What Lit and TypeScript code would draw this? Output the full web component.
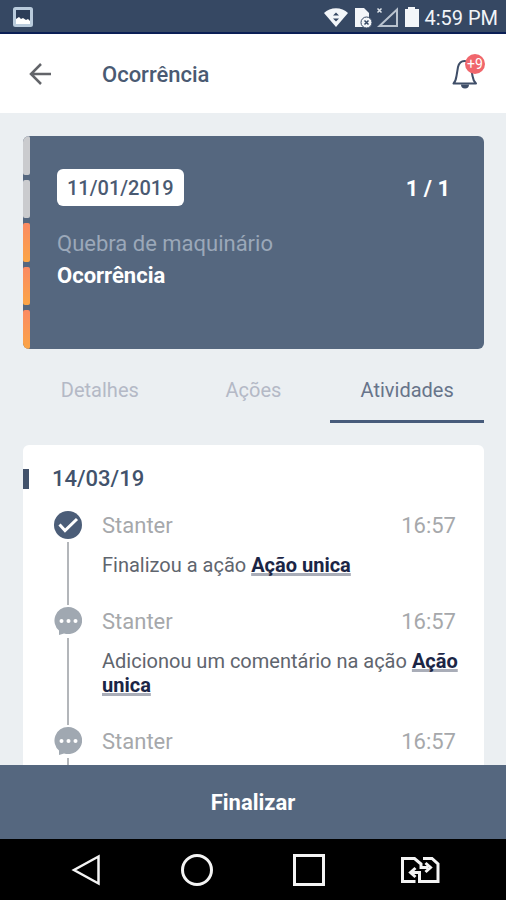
import { LitElement, html, css, svg, nothing } from "lit";
import { customElement, property, state } from "lit/decorators.js";
import { classMap } from "lit/directives/class-map.js";

type Kind = "done" | "comment";

interface Activity {
  kind: Kind;
  author: string;
  time: string;
  text: string;
  action: string;
}

const ACTIVITIES: Activity[] = [
  { kind: "done", author: "Stanter", time: "16:57", text: "Finalizou a ação", action: "Ação unica" },
  { kind: "comment", author: "Stanter", time: "16:57", text: "Adicionou um comentário na ação", action: "Ação unica" },
  { kind: "comment", author: "Stanter", time: "16:57", text: "", action: "" },
];

@customElement("status-bar")
class StatusBar extends LitElement {
  static styles = css`
    :host {
      display: flex;
      align-items: center;
      justify-content: space-between;
      box-sizing: border-box;
      height: 34px;
      flex: none;
      padding: 0 8px 0 12px;
      background: #364863;
      border-bottom: 2px solid #0b1f55;
      color: #f1f4f8;
    }
    .right {
      display: flex;
      align-items: center;
      gap: 5px;
    }
    svg {
      display: block;
    }
    .time {
      font-size: 20px;
      line-height: 24px;
      margin-top: 4px;
    }
    .icons {
      margin-top: 2px;
    }
  `;

  render() {
    return html`
      <svg class="icons" width="22" height="22" viewBox="0 0 22 22" aria-hidden="true">
        <rect x="2.500" y="2.500" width="17" height="17" rx="1" fill="#2c3d58" stroke="#b9cbdc" stroke-width="3" />
        <path d="M4 18v-5l3-2 2 2 2-1 3 2 2-1 2 2v3z" fill="#fff" />
      </svg>
      <div class="right">
        <svg class="icons" width="96" height="22" viewBox="0 0 96 22" aria-hidden="true">
          <path d="M1 7C7 .5 19 .5 25 7L13 21z" fill="#f3f6f9" />
          <path d="M10 9.500l3-3 3 3zM10 12.500l3 3 3-3z" fill="#364863" />
          <path d="M32 2h9l5 5v14H32z" fill="#f3f6f9" />
          <circle cx="43.500" cy="16.500" r="5.500" fill="#f3f6f9" stroke="#364863" />
          <path d="M41.500 14.500l4 4m0-4l-4 4" stroke="#364863" stroke-width="1.500" />
          <path d="M56.500 20L74 3.500V20z" fill="none" stroke="#b9c3cf" stroke-width="2" />
          <path d="M54.500 2.500l4 4m0-4l-4 4" stroke="#dfe5eb" stroke-width="1.500" />
          <path d="M82 3h3V1h7v2h4v18H82z" fill="#f3f6f9" />
        </svg>
        <span class="time">4:59 PM</span>
      </div>
    `;
  }
}

@customElement("nav-bar")
class NavBar extends LitElement {
  static styles = css`
    :host {
      display: grid;
      grid-template-columns: repeat(4, 1fr);
      align-items: center;
      height: 61px;
      flex: none;
      padding: 0 30px;
      background: #000;
    }
    button {
      display: flex;
      justify-content: center;
      padding: 0;
      border: 0;
      background: none;
      color: #f4f4f4;
    }
    svg {
      display: block;
      fill: none;
      stroke: currentColor;
      stroke-width: 3;
    }
  `;

  render() {
    return html`
      <button aria-label="Voltar">
        <svg width="32" height="34" viewBox="0 0 32 34"><path d="M28.500 3.500v27L4 17z" stroke-width="2.500" /></svg>
      </button>
      <button aria-label="Início">
        <svg width="34" height="34" viewBox="0 0 34 34"><circle cx="17" cy="17" r="14.500" /></svg>
      </button>
      <button aria-label="Recentes">
        <svg width="34" height="34" viewBox="0 0 34 34"><rect x="2.500" y="2.500" width="29" height="29" /></svg>
      </button>
      <button aria-label="Trocar chip">
        <svg width="40" height="28" viewBox="0 0 40 28">
          <path d="M15.500 25.500H2.500V2.500h12L21 8v3.500h7" />
          <path d="M23 2.500h9l6 5.500v17.500H19.500V16.500H12" />
          <path d="M25.500 7l5 4.500-5 4.500M15.500 12l-5 4.500 5 4.500" />
        </svg>
      </button>
    `;
  }
}

@customElement("activity-item")
class ActivityItem extends LitElement {
  @property({ attribute: false }) item!: Activity;

  static styles = css`
    :host {
      display: flex;
      gap: 20px;
      min-height: 96px;
    }
    .rail {
      display: flex;
      flex-direction: column;
      align-items: center;
      width: 28px;
      flex: none;
    }
    .rail svg {
      display: block;
      flex: none;
    }
    .line {
      width: 2px;
      flex: 1;
      margin: 3px 0 2px;
      background: #b3b6ba;
    }
    .body {
      flex: 1;
      min-width: 0;
      padding-bottom: 30px;
    }
    .head {
      display: flex;
      justify-content: space-between;
      padding-right: 8px;
      font-size: 22px;
      line-height: 30px;
      color: #a6a8ab;
    }
    .text {
      margin: 12px 0 0;
      font-size: 20px;
      line-height: 24px;
      color: #5f656e;
    }
    a {
      color: #1b2545;
      font-weight: 700;
      text-decoration: underline;
      text-decoration-color: #a9adb8;
      text-decoration-thickness: 3px;
      text-underline-offset: 1px;
      text-decoration-skip-ink: none;
    }
  `;

  private icon() {
    return this.item.kind === "done"
      ? svg`<circle cx="14" cy="14" r="14" fill="#4b5d78" />
          <path d="M5.500 13.500l5.500 6L23 8" fill="none" stroke="#fff" stroke-width="3" />`
      : svg`<path d="M14 0a14 13.500 0 1 1-4 26.400L5 28v-4.400A13.500 13.500 0 0 1 14 0z" fill="#a0a8b1" />
          <circle cx="7.500" cy="14" r="2" fill="#fff" />
          <circle cx="14.500" cy="14" r="2" fill="#fff" />
          <circle cx="21.500" cy="14" r="2" fill="#fff" />`;
  }

  render() {
    const { author, time, text, action } = this.item;
    return html`
      <div class="rail">
        <svg width="28" height="28" viewBox="0 0 28 28" aria-hidden="true">${this.icon()}</svg>
        <div class="line"></div>
      </div>
      <div class="body">
        <div class="head"><span>${author}</span><time>${time}</time></div>
        ${text ? html`<p class="text">${text} <a href="#acao">${action}</a></p>` : nothing}
      </div>
    `;
  }
}

@customElement("app-root")
class AppRoot extends LitElement {
  @state() private tab = "Atividades";

  static styles = css`
    :host {
      display: flex;
      flex-direction: column;
      height: 100vh;
      background: #ebeff2;
      font-family: Roboto, "Liberation Sans", sans-serif;
    }
    button {
      font-family: inherit;
      border: 0;
      margin: 0;
      padding: 0;
      background: none;
    }
    svg {
      display: block;
    }
    header {
      display: flex;
      align-items: center;
      height: 79px;
      flex: none;
      padding: 0 21px 0 28px;
      background: #fff;
    }
    .title {
      flex: 1;
      margin: 0 0 0 50px;
      padding-top: 2px;
      font-size: 22px;
      line-height: 28px;
      font-weight: 500;
      color: #4a5a72;
    }
    .bell {
      position: relative;
    }
    .badge {
      position: absolute;
      top: 0;
      right: 0;
      width: 20px;
      border-radius: 10px;
      background: #f0666c;
      color: #fff;
      font-size: 14px;
      line-height: 20px;
      text-align: center;
    }
    main {
      flex: 1;
      min-height: 0;
      overflow-y: auto;
      scrollbar-width: none;
      padding: 23px 22px 0 23px;
    }
    .card {
      display: flex;
      min-height: 213px;
      border-radius: 6px;
      overflow: hidden;
      background: #55677f;
      color: #fff;
    }
    .levels {
      display: grid;
      grid-template-rows: repeat(5, 1fr);
      gap: 5px;
      width: 7px;
      flex: none;
    }
    .level {
      border-radius: 2px;
      background: #cacbce;
    }
    .level.on {
      background: linear-gradient(#fb8a63, #fba546);
    }
    .info {
      flex: 1;
      padding: 33px 34px 0 27px;
    }
    .row {
      display: flex;
      align-items: center;
      justify-content: space-between;
      margin-bottom: 22px;
    }
    .date {
      padding: 5px 10px 3px;
      border-radius: 6px;
      background: #fff;
      color: #4a5a72;
      font-size: 20px;
      line-height: 29px;
      font-weight: 500;
    }
    .count {
      padding-top: 2px;
      font-size: 22px;
      line-height: 28px;
      font-weight: 700;
    }
    .kind,
    .name {
      margin: 0;
      font-size: 22px;
      line-height: 32px;
    }
    .kind {
      color: #9ba8b9;
    }
    .name {
      font-weight: 700;
    }
    .tabs {
      display: grid;
      grid-template-columns: repeat(3, 1fr);
      margin-bottom: 22px;
    }
    .tab {
      padding: 27px 0 16px;
      border-bottom: 3px solid transparent;
      font-size: 20px;
      line-height: 28px;
      color: #b4b9c6;
    }
    .tab.active {
      color: #67748a;
      border-bottom-color: #475b7b;
    }
    .list {
      padding: 19px 20px 24px 0;
      border-radius: 6px;
      background: #fff;
    }
    .day {
      display: flex;
      align-items: center;
      gap: 23px;
      margin: 0 0 17px;
      font-size: 22px;
      line-height: 30px;
      font-weight: 500;
      color: #42526b;
    }
    .mark {
      width: 6px;
      height: 20px;
      background: #42526b;
    }
    .items {
      padding-left: 31px;
    }
    .finish {
      flex: none;
      padding: 24px 0 22px;
      background: #55677f;
      color: #fff;
      font-size: 22px;
      line-height: 28px;
      font-weight: 700;
    }
  `;

  render() {
    return html`
      <status-bar></status-bar>
      <header>
        <button aria-label="Voltar">
          <svg width="24" height="24" viewBox="0 0 24 24" fill="none" stroke="#626469" stroke-width="2.500">
            <path d="M23 12H3M13 2L3 12l10 10" />
          </svg>
        </button>
        <h1 class="title">Ocorrência</h1>
        <button class="bell" aria-label="Notificações">
          <svg width="34" height="40" viewBox="0 0 34 40" fill="none" stroke="#3f4e68" stroke-width="2">
            <path d="M2.500 29.500h22.500c-2-2-3-4-3.500-7.500L20 13c-1-4-3-6-6.500-6S8 9 7 13l-1.500 9c-.5 3.500-1 5.500-3 7.500z" stroke-linejoin="round" />
            <path d="M10 30.500h8a4 4 0 0 1-8 0z" fill="#3f4e68" stroke="none" />
          </svg>
          <span class="badge">+9</span>
        </button>
      </header>
      <main>
        <section class="card">
          <div class="levels">
            ${[false, false, true, true, true].map(
              (on) => html`<span class=${classMap({ level: true, on })}></span>`
            )}
          </div>
          <div class="info">
            <div class="row">
              <time class="date">11/01/2019</time>
              <span class="count">1 / 1</span>
            </div>
            <p class="kind">Quebra de maquinário</p>
            <p class="name">Ocorrência</p>
          </div>
        </section>
        <nav class="tabs">
          ${["Detalhes", "Ações", "Atividades"].map(
            (name) => html`<button
              class=${classMap({ tab: true, active: this.tab === name })}
              @click=${() => (this.tab = name)}
            >${name}</button>`
          )}
        </nav>
        <section class="list">
          <h2 class="day"><span class="mark"></span>14/03/19</h2>
          <div class="items">
            ${ACTIVITIES.map((item) => html`<activity-item .item=${item}></activity-item>`)}
          </div>
        </section>
      </main>
      <button class="finish">Finalizar</button>
      <nav-bar></nav-bar>
    `;
  }
}
